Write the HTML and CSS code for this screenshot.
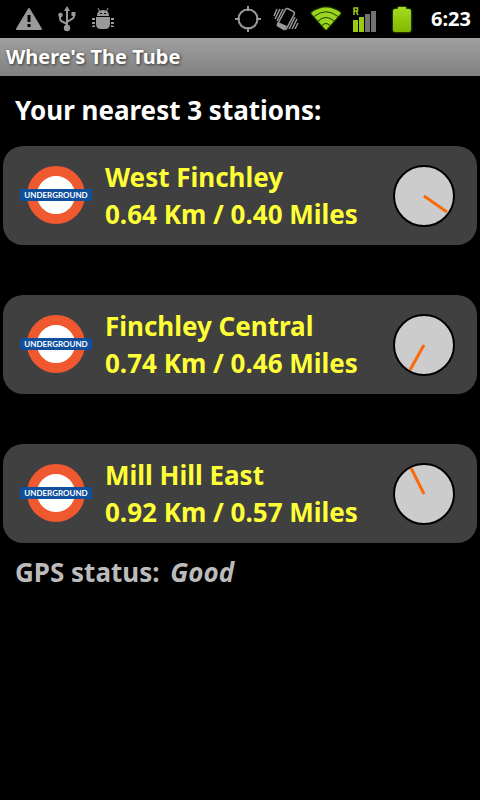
FILE: index.html
```html
<!DOCTYPE html>
<html lang="en">
<head>
<meta charset="utf-8">
<meta name="viewport" content="width=device-width, initial-scale=1">
<title>Where's The Tube</title>
<link rel="stylesheet" href="styles.css">
</head>
<body>
<svg class="defs" width="0" height="0" aria-hidden="true">
  <symbol id="mark" viewBox="0 0 72 60">
    <circle cx="36" cy="30" r="24" fill="#fff" stroke="#f0582f" stroke-width="10"/>
    <rect x="0" y="24" width="72" height="12" fill="#0f4f9e"/>
  </symbol>
</svg>
<div class="status-bar">
  <div class="status-group notices">
    <svg width="26" height="24" viewBox="0 0 26 24" aria-label="Warning"><path fill="#999" stroke="#999" stroke-width="2" stroke-linejoin="round" d="M13 2 25 22H1Z"/><path fill="#000" d="M11.500 8h3v7h-3zM11.500 17h3v3h-3z"/></svg>
    <svg width="18" height="26" viewBox="0 0 18 26" aria-label="USB"><g fill="none" stroke="#999" stroke-width="2"><path d="M9 4v18M9 18 3 15q-1-1-1-3V9M9 16l5-3q2-1 2-3V8"/></g><g fill="#999"><path d="M9 0l3 5H6z"/><circle cx="9" cy="22" r="3.200"/><circle cx="2.500" cy="9" r="2.300"/><path d="M13.500 6h4v4h-4z"/></g></svg>
    <svg width="22" height="22" viewBox="0 0 22 22" aria-label="Debugging"><g fill="#999"><path d="M5 8q0-6 6-6t6 6zM4 9h14v7q0 5-5 5H9q-5 0-5-5z"/><path d="M0 10h3v2H0zM0 14h3v2H0zM0 18l3-1v2H0zM22 10h-3v2h3zM22 14h-3v2h3zM22 18l-3-1v2h3z"/></g><path d="M6 0l2 4M16 0l-2 4" stroke="#999"/><path fill="#000" d="M8 5h2v1H8zM12 5h2v1h-2z"/></svg>
  </div>
  <div class="status-group system">
    <svg width="26" height="26" viewBox="0 0 26 26" aria-label="GPS"><g fill="none" stroke="#999" stroke-width="2"><circle cx="13" cy="13" r="9.500"/><path d="M13 0v5M13 21v5M0 13h5M21 13h5"/></g></svg>
    <svg width="26" height="24" viewBox="0 0 26 24" aria-label="Vibrate"><g fill="none" stroke="#999" stroke-width="1.500"><rect x="8" y="2" width="10" height="20" rx="2" transform="rotate(28 13 12)"/><path d="M4 2 1 9M7 2 2 12M10 2 4 14M22 10 16 22M24 12 19 22M25 16 22 22"/></g><path fill="#999" d="M5 15 14 19 12 22Q11 23 9 22L4 19Q3 18 4 17Z"/></svg>
    <svg class="glow" width="30" height="24" viewBox="0 0 30 24" aria-label="Wi-Fi"><path fill="#99d61c" d="M15 23 0 6Q15-5 30 6Z"/><g fill="none" stroke="#233900" stroke-width="1"><path d="M3 9.500Q15 0 27 9.500M7 14Q15 7 23 14M11 18.500Q15 14.500 19 18.500"/></g></svg>
    <svg width="24" height="25" viewBox="0 0 24 25" aria-label="Signal, roaming"><path fill="none" stroke="#99cc1c" stroke-width="1.500" d="M1 8V1h3.500v3H1M3 4l2 4"/><path fill="#99cc10" d="M0 13h5v12H0zM6 10h5v15H6z"/><path fill="#727272" d="M12 7h5v18h-5zM18 4h5v21h-5z"/></svg>
    <svg class="glow battery" width="18" height="25" viewBox="0 0 18 25" aria-label="Battery"><defs><linearGradient id="charge" x2="0" y2="1"><stop stop-color="#a5dc20"/><stop offset="1" stop-color="#80b800"/></linearGradient></defs><path fill="url(#charge)" d="M5 2V0h8v2h3q2 0 2 2v19q0 2-2 2H2q-2 0-2-2V4q0-2 2-2z"/></svg>
    <time class="clock">6:23</time>
  </div>
</div>
<header class="title-bar">Where's The Tube</header>
<main>
  <h1 class="heading">Your nearest 3 stations:</h1>
  <ul class="stations">
    <li class="station">
      <svg class="roundel" viewBox="0 0 72 60"><use href="#mark"/><text x="36" y="33" text-anchor="middle">UNDERGROUND</text></svg>
      <div class="info"><div>West Finchley</div><div>0.64 Km / 0.40 Miles</div></div>
      <svg class="compass" viewBox="0 0 62 62" aria-label="Direction"><circle cx="31" cy="31" r="30"/><path d="M31 31 54 47"/></svg>
    </li>
    <li class="station">
      <svg class="roundel" viewBox="0 0 72 60"><use href="#mark"/><text x="36" y="33" text-anchor="middle">UNDERGROUND</text></svg>
      <div class="info"><div>Finchley Central</div><div>0.74 Km / 0.46 Miles</div></div>
      <svg class="compass" viewBox="0 0 62 62" aria-label="Direction"><circle cx="31" cy="31" r="30"/><path d="M31 31 17 56"/></svg>
    </li>
    <li class="station">
      <svg class="roundel" viewBox="0 0 72 60"><use href="#mark"/><text x="36" y="33" text-anchor="middle">UNDERGROUND</text></svg>
      <div class="info"><div>Mill Hill East</div><div>0.92 Km / 0.57 Miles</div></div>
      <svg class="compass" viewBox="0 0 62 62" aria-label="Direction"><circle cx="31" cy="31" r="30"/><path d="M31 31 18 5"/></svg>
    </li>
  </ul>
  <p class="gps">GPS status: <em>Good</em></p>
</main>
</body>
</html>
```
FILE: styles.css
```css
* { box-sizing: border-box; }
body {
  margin: 0;
  background: #000;
  color: #fff;
  font: 700 26px/37px "Noto Sans", "Open Sans", sans-serif;
}
.defs { display: block; position: absolute; }
.status-bar {
  height: 38px;
  display: flex;
  justify-content: space-between;
  align-items: center;
  padding: 0 9px 0 16px;
}
.status-group { display: flex; align-items: center; }
.notices { gap: 16px; }
.system { gap: 12px; }
.status-group svg { flex: none; }
.glow { filter: drop-shadow(0 0 1px #6a9c00); }
.battery { margin-left: 4px; }
.clock { font-size: 20px; line-height: 38px; margin-left: 8px; }
.title-bar {
  height: 38px;
  padding-left: 6px;
  background: linear-gradient(#a0a0a0, #808080);
  font-size: 20px;
  line-height: 37px;
  text-shadow: 1px 1px 3px #333;
}
main { padding: 16px 3px 0; }
.heading {
  margin: 0 0 17px;
  padding-left: 12px;
  font-size: 26px;
}
.stations {
  list-style: none;
  margin: 0;
  padding: 0;
  display: grid;
  gap: 50px;
}
.station {
  display: flex;
  align-items: center;
  padding: 13px 22px 12px 17px;
  border-radius: 20px;
  background: #404040;
  color: #ffff38;
}
.roundel { width: 72px; height: 60px; flex: none; margin-bottom: 2px; }
.roundel text { font: 700 8px "Lato", sans-serif; fill: #fff; }
.info { flex: 1; margin-left: 13px; }
.compass { width: 62px; height: 62px; flex: none; }
.compass circle { fill: #ccc; stroke: #000; stroke-width: 2; }
.compass path { stroke: #fa6a08; stroke-width: 3; }
.gps { margin: 11px 0 0; padding-left: 12px; color: #bbb; }
.gps em { margin-left: 4px; }
```
